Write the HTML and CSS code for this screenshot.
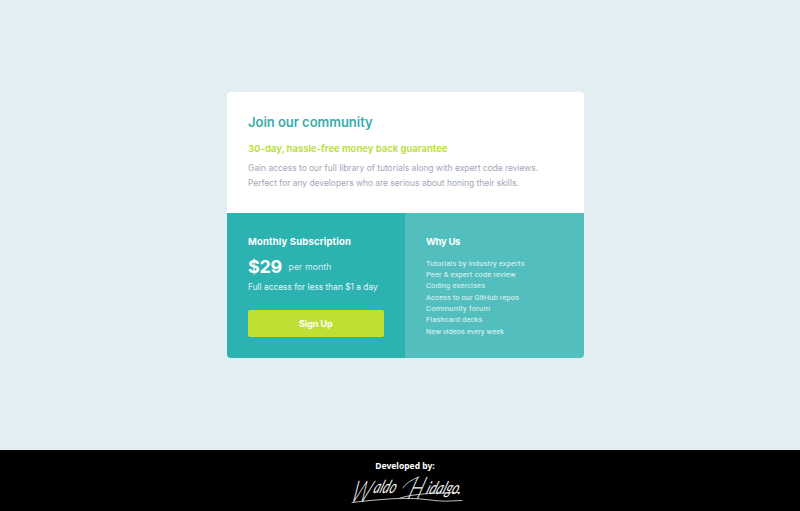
FILE: index.html
```html
<!DOCTYPE html>
<html lang="en">
<head>
<meta charset="utf-8">
<title>Join our community</title>
<link rel="stylesheet" href="styles.css">
</head>
<body>
<main>
  <article class="card">
    <section class="intro">
      <h1>Join our community</h1>
      <h2>30-day, hassle-free money back guarantee</h2>
      <p class="line-one">Gain access to our full library of tutorials along with expert code reviews.</p>
      <p class="line-two">Perfect for any developers who are serious about honing their skills.</p>
    </section>
    <div class="columns">
      <section class="plan">
        <h3 class="plan-title">Monthly Subscription</h3>
        <div class="price"><strong>$29</strong><span>per month</span></div>
        <p class="access">Full access for less than $1 a day</p>
        <button type="button">Sign Up</button>
      </section>
      <section class="why">
        <h3>Why Us</h3>
        <ul>
          <li class="snug">Tutorials by industry experts</li>
          <li>Peer &amp; expert code review</li>
          <li>Coding exercises</li>
          <li class="tight">Access to our GitHub repos</li>
          <li class="loose">Community forum</li>
          <li>Flashcard decks</li>
          <li class="tighter">New videos every week</li>
        </ul>
      </section>
    </div>
  </article>
</main>
<footer>
  <p>Developed by:</p>
  <svg class="signature" width="118" height="34" viewBox="0 0 118 34">
    <g class="script" transform="skewX(-20)">
      <text x="14" y="28.500" font-size="30" textLength="18" lengthAdjust="spacingAndGlyphs">W</text>
      <text class="small" x="34" y="20.500" font-size="18" textLength="22" lengthAdjust="spacingAndGlyphs">aldo</text>
      <text x="70" y="26" font-size="31" textLength="14" lengthAdjust="spacingAndGlyphs">H</text>
      <text class="small" x="87" y="21" font-size="17.500" textLength="35" lengthAdjust="spacingAndGlyphs">idalgo.</text>
    </g>
    <path class="stroke" d="M6 29.500C36 26 60 24 80 26.500S100 28 116 27.500M54 25C70 20 94 20 113 19.500M57 15C59 11 65 7 73 4"/>
  </svg>
</footer>
</body>
</html>
```
FILE: styles.css
```css
* { box-sizing: border-box; margin: 0; padding: 0; }
body {
  height: 511px;
  display: flex;
  flex-direction: column;
  overflow: hidden;
  background: #e3eef3;
  font-family: Inter, sans-serif;
}
main {
  flex: 1;
  display: flex;
  justify-content: center;
  align-items: flex-start;
  padding: 92px 0 0 10px;
}
.card {
  width: 357px;
  height: 266px;
  border-radius: 4px;
  overflow: hidden;
  background: #fff;
  white-space: nowrap;
}
.intro { height: 121px; padding: 22px 21.500px 0; }
h1 {
  font-size: 13px;
  font-weight: 600;
  line-height: 16px;
  letter-spacing: -.03px;
  color: #3aadaa;
}
h2 {
  margin-top: 12px;
  font-size: 9.500px;
  line-height: 14px;
  letter-spacing: -.03px;
  color: #bfdf4a;
}
.intro p {
  font-size: 8.500px;
  line-height: 15px;
  letter-spacing: -.035px;
  color: #a3a6b8;
}
.intro .line-one { margin-top: 5px; }
.columns { display: grid; grid-template-columns: 1fr 1fr; height: 145px; color: #fff; }
.plan { padding: 22px 21.500px 0; background: #2bb2b1; }
.why { padding: 22px 21px 0; background: #52bebd; }
h3 { font-size: 9.500px; line-height: 14px; letter-spacing: -.3px; }
.plan-title { letter-spacing: .15px; }
.price { display: flex; align-items: center; height: 24px; margin-top: 6px; }
.price strong { font-size: 18px; line-height: 24px; letter-spacing: -.3px; width: 40.500px; }
.price span { font-size: 8.700px; letter-spacing: .1px; color: #d5f0ef; }
.access { margin-top: 2px; font-size: 8.300px; line-height: 13px; letter-spacing: .02px; color: #e6f7f6; }
button {
  display: block;
  width: 135.500px;
  height: 27px;
  margin-top: 16px;
  border: 0;
  border-radius: 2px;
  background: #c0df34;
  color: #fff;
  font: 700 9px/27px Inter, sans-serif;
  letter-spacing: -.07px;
}
ul { list-style: none; margin-top: 8.600px; }
li { font-family: Roboto, sans-serif; font-size: 7.500px; line-height: 11.350px; letter-spacing: .14px; color: #e0f4f3; }
.snug { letter-spacing: .16px; }
.tight { letter-spacing: .06px; }
.tighter { letter-spacing: .03px; }
.loose { letter-spacing: .26px; }
footer {
  height: 61px;
  padding: 8.500px 0 0 10px;
  display: flex;
  flex-direction: column;
  align-items: center;
  background: #000;
  color: #fff;
}
footer p { font: 700 8.500px/13px "Noto Sans", sans-serif; }
.signature { display: block; margin-top: 1px; overflow: visible; }
.script { fill: #f2f2f2; font-family: Lato, sans-serif; font-style: italic; font-weight: 300; }
.script .small { font-weight: 400; }
.stroke { fill: none; stroke: #eee; stroke-width: .8; stroke-linecap: round; }
```
